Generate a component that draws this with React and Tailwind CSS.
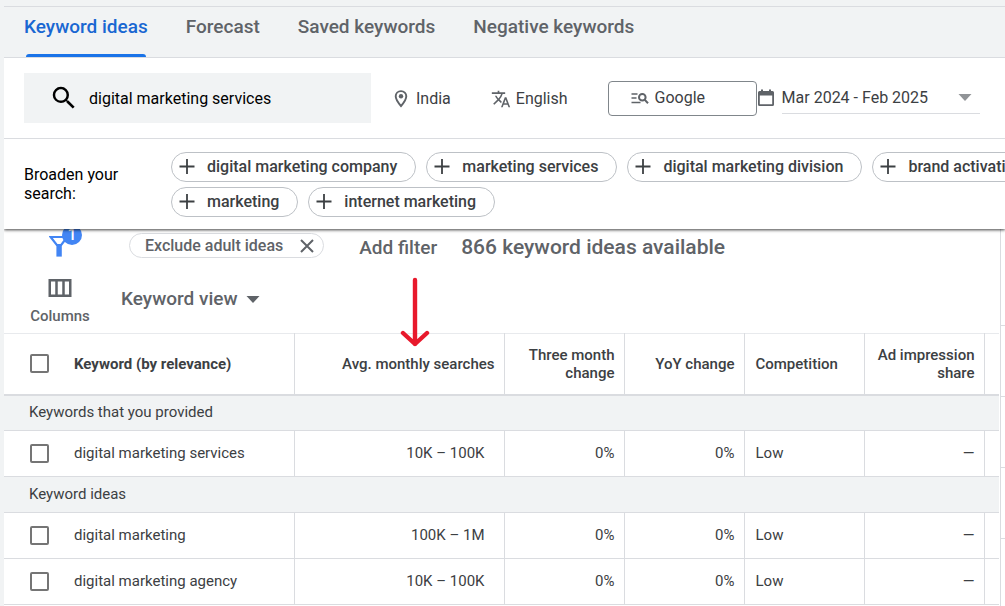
import React from "react";
import { MdSearch, MdTranslate } from "react-icons/md";

const tabs = ["Keyword ideas", "Forecast", "Saved keywords", "Negative keywords"];

const suggestions = [
  ["digital marketing company", "marketing services", "digital marketing division", "brand activation"],
  ["marketing", "internet marketing"],
];

const groups = [
  {
    title: "Keywords that you provided",
    rows: [{ keyword: "digital marketing services", searches: "10K – 100K" }],
  },
  {
    title: "Keyword ideas",
    rows: [
      { keyword: "digital marketing", searches: "100K – 1M" },
      { keyword: "digital marketing agency", searches: "10K – 100K" },
    ],
  },
];

function PlusIcon() {
  return (
    <svg viewBox="0 0 16 16" className="size-4 shrink-0" fill="none" stroke="#3c4043" strokeWidth="1.8" aria-hidden="true">
      <path d="M8 0v15M0.5 7.5h15" />
    </svg>
  );
}

function CloseIcon() {
  return (
    <svg viewBox="0 0 14 14" className="size-3.5" fill="none" stroke="#5f6368" strokeWidth="2" aria-hidden="true">
      <path d="M1 1l12 12M13 1L1 13" />
    </svg>
  );
}

function PlaceIcon() {
  return (
    <svg viewBox="0 0 20 20" className="size-5 shrink-0" fill="none" aria-hidden="true">
      <path d="M10 2.1c-3 0-5.3 2.3-5.3 5.2C4.7 11 10 17 10 17s5.3-6 5.3-9.7c0-2.9-2.3-5.2-5.3-5.2z" stroke="#5f6368" strokeWidth="1.9" />
      <circle cx="10" cy="7.3" r="2.2" fill="#5f6368" />
    </svg>
  );
}

function CalendarIcon() {
  return (
    <svg viewBox="0 0 18 18" className="size-[18px] shrink-0" aria-hidden="true">
      <path
        fill="#5f6368"
        fillRule="evenodd"
        d="M4 0.5h2V2h6V0.5h2V2h1.5A1.5 1.5 0 0 1 17 3.500V15.500A1.500 1.500 0 0 1 15.500 17H2.500A1.500 1.500 0 0 1 1 15.500V3.500A1.500 1.500 0 0 1 2.500 2H4zM2.800 6.500v8.700h12.400V6.500z"
      />
    </svg>
  );
}

function NetworkIcon() {
  return (
    <svg viewBox="0 0 18 14" className="h-3.5 w-[18px] shrink-0" fill="none" stroke="#5f6368" aria-hidden="true">
      <path d="M0.5 3h6M0.5 7h5M0.5 11.5h9" strokeWidth="1.6" />
      <circle cx="11.3" cy="6.2" r="3.3" strokeWidth="2" />
      <path d="M13.6 8.6L17 12.2" strokeWidth="2" />
    </svg>
  );
}

function FunnelIcon() {
  return (
    <svg viewBox="0 0 22 22" className="size-[22px]" fill="none" aria-hidden="true">
      <path d="M1.6 2h16.6l-6 8H7.800z" stroke="#4285f4" strokeWidth="2.2" />
      <path d="M7.4 9h5.4v12.6H7.4z" fill="#4285f4" />
    </svg>
  );
}

function ColumnsIcon() {
  return (
    <svg viewBox="0 0 24 18" className="h-[18px] w-6" fill="none" stroke="#5f6368" strokeWidth="2.5" aria-hidden="true">
      <path d="M1.75 1.25h20.5v15.5h-20.5zM8.5 1v16M15.5 1v16" />
    </svg>
  );
}

function Caret({ className }) {
  return (
    <svg viewBox="0 0 14 7" className={`h-[7px] w-3.5 ${className}`} fill="currentColor" aria-hidden="true">
      <path d="M0.5 0h13L7 7z" />
    </svg>
  );
}

function Tick({ label }) {
  return (
    <input
      type="checkbox"
      aria-label={label}
      className="block size-[19px] appearance-none rounded-xs border-2 border-[#757575] bg-white checked:bg-[#1a73e8]"
    />
  );
}

function Tabs() {
  return (
    <nav className="flex h-[52px] gap-[38px] border-y border-[#dadce0] pl-5 text-[19px]/6 font-medium">
      {tabs.map((tab, i) => (
        <a
          key={tab}
          href="#"
          className={
            i === 0
              ? "flex flex-col justify-between pt-2 text-[#1967d2]"
              : "flex flex-col justify-between pt-2 text-[#5f6368]"
          }
        >
          {tab}
          {i === 0 && <span className="mx-0.5 h-[3px] rounded-t-full bg-[#1a73e8]" />}
        </a>
      ))}
    </nav>
  );
}

function SearchBar() {
  return (
    <div className="flex items-center bg-white py-[15px] pl-5 text-base text-[#3c4043]">
      <label className="flex h-[50px] w-[347px] shrink-0 items-center gap-2.5 bg-[#f1f3f4] pl-[25px] text-black">
        <MdSearch className="size-[30px] shrink-0" />
        <input
          type="text"
          aria-label="Keywords"
          defaultValue="digital marketing services"
          className="w-full min-w-0 bg-transparent pt-0.5 outline-none"
        />
      </label>
      <button className="ml-5 flex shrink-0 items-center gap-[5px] pt-0.5">
        <PlaceIcon />
        India
      </button>
      <button className="ml-10 flex shrink-0 items-center gap-[5px] pt-0.5">
        <MdTranslate className="size-5 text-[#5f6368]" />
        English
      </button>
      <button className="ml-10 flex h-[35px] w-[149px] shrink-0 items-center gap-1.5 rounded border border-[#80868b] pl-[22px]">
        <NetworkIcon />
        Google
      </button>
      <div className="flex grow items-center gap-[7px] pr-[25px]">
        <CalendarIcon />
        <label className="flex h-8 grow items-center border-b border-[#dadce0] pr-2">
          <select aria-label="Date range" className="grow appearance-none bg-transparent outline-none">
            <option>Mar 2024 - Feb 2025</option>
          </select>
          <Caret className="text-[#919497]" />
        </label>
      </div>
    </div>
  );
}

function Broaden() {
  return (
    <section className="relative z-10 flex items-start border-t border-[#dadce0] bg-white pt-[13px] pb-3 pl-5 shadow-[0_1px_3px_rgba(0,0,0,0.75)] [clip-path:inset(0_0_-6px_0)]">
      <h2 className="w-[147px] shrink-0 pt-[13px] pr-8 text-base/[19px] text-black">Broaden your search:</h2>
      <div className="flex flex-col gap-[5px]">
        {suggestions.map((line) => (
          <div key={line[0]} className="flex gap-2.5">
            {line.map((text) => (
              <button
                key={text}
                className="flex h-[30px] shrink-0 items-center gap-3 rounded-full border border-[#bdc1c6] pr-[18px] pl-[7px] text-base font-medium whitespace-nowrap text-[#3c4043]"
              >
                <PlusIcon />
                {text}
              </button>
            ))}
          </div>
        ))}
      </div>
    </section>
  );
}

function Toolbar() {
  return (
    <section className="relative flex pb-[9px] pl-4 text-[#5f6368]">
      <div className="flex w-20 shrink-0 flex-col items-center pt-1.5">
        <button aria-label="Filters, 1 applied" className="relative">
          <FunnelIcon />
          <span className="absolute -top-[10px] left-[13px] flex size-5 items-center justify-center rounded-full bg-[#4285f4] text-base/5 font-medium text-white">
            1
          </span>
        </button>
        <button className="mt-[22px] flex flex-col items-center gap-[11px] text-[15px]/4 font-medium">
          <ColumnsIcon />
          Columns
        </button>
      </div>
      <div className="flex grow flex-col items-start pt-1 pl-[21px]">
        <div className="flex items-start gap-[35px] pl-2">
          <div className="flex h-[25px] items-center gap-[17px] rounded-full border border-[#dadce0] pr-[9px] pl-[15px] text-base font-medium">
            Exclude adult ideas
            <button aria-label="Remove filter">
              <CloseIcon />
            </button>
          </div>
          <div className="flex items-start gap-6">
            <button className="pt-px text-[19px]/7 font-medium">Add filter</button>
            <p className="text-[21px]/7 font-medium">866 keyword ideas available</p>
          </div>
        </div>
        <label className="mt-[25px] flex items-center gap-2 text-[19px]/6 font-medium">
          <select aria-label="View" className="appearance-none bg-transparent outline-none">
            <option>Keyword view</option>
          </select>
          <Caret className="text-[#5f6368]" />
        </label>
      </div>
      <svg
        viewBox="0 0 30 72"
        className="absolute top-[47px] left-[396px] z-10 h-[72px] w-[30px]"
        fill="none"
        stroke="#e8192c"
        strokeWidth="4.4"
        strokeLinecap="round"
        strokeLinejoin="round"
        aria-hidden="true"
      >
        <path d="M15 4v64M3 57l12 11 12-11" />
      </svg>
    </section>
  );
}

function KeywordTable() {
  return (
    <table className="w-full table-fixed border-t border-[#e8eaed] text-[15px]/[18px] text-[#3c4043]">
      <colgroup>
        <col className="w-[70px]" />
        <col />
        <col className="w-[210px]" />
        <col className="w-[120px]" />
        <col className="w-[120px]" />
        <col className="w-[120px]" />
        <col className="w-[120px]" />
        <col className="w-[15px]" />
      </colgroup>
      <thead>
        <tr className="h-[61px] border-b-2 border-[#dadce0] *:font-medium">
          <th className="pl-[26px]">
            <Tick label="Select all keywords" />
          </th>
          <th className="border-r border-[#dadce0] text-left font-bold!">Keyword (by relevance)</th>
          <th className="border-r border-[#dadce0] pr-[9px] text-right">Avg. monthly searches</th>
          <th className="border-r border-[#dadce0] pr-[9px] text-right">Three month change</th>
          <th className="border-r border-[#dadce0] pr-[9px] text-right">YoY change</th>
          <th className="border-r border-[#dadce0] pl-[11px] text-left">Competition</th>
          <th className="border-r border-[#dadce0] pr-[9px] text-right">Ad impression share</th>
          <td />
        </tr>
      </thead>
      {groups.map((group) => (
        <tbody key={group.title}>
          <tr className="h-9 border-b border-[#dadce0] bg-[#f1f3f4]">
            <th colSpan={8} className="pb-0.5 pl-[25px] text-left font-normal">
              {group.title}
            </th>
          </tr>
          {group.rows.map((row) => (
            <tr key={row.keyword} className="h-[46px] border-b border-[#dadce0] *:not-first:pb-0.5">
              <td className="pl-[26px]">
                <Tick label={row.keyword} />
              </td>
              <td className="border-r border-[#dadce0]">{row.keyword}</td>
              <td className="border-r border-[#dadce0] pr-[19px] text-right">{row.searches}</td>
              <td className="border-r border-[#dadce0] pr-[9px] text-right">0%</td>
              <td className="border-r border-[#dadce0] pr-[9px] text-right">0%</td>
              <td className="border-r border-[#dadce0] pl-[11px]">Low</td>
              <td className="border-r border-[#dadce0] pr-[9px] text-right">—</td>
              <td />
            </tr>
          ))}
        </tbody>
      ))}
    </table>
  );
}

function Rail() {
  return (
    <aside className="ml-px flex w-[5px] shrink-0 flex-col border-l border-[#dadce0] pt-[25px]">
      <div className="h-[72px] border-b border-[#dadce0]" />
      <div className="h-[71px] border-b border-[#dadce0]" />
      <div className="h-[71px] border-b border-[#dadce0]" />
      <div className="h-[71px] border-b border-[#dadce0]" />
    </aside>
  );
}

export default function App() {
  return (
    <div className="min-h-screen overflow-x-clip bg-[#f1f3f4] pt-1.5 pl-1 font-['Roboto',sans-serif]">
      <Tabs />
      <SearchBar />
      <Broaden />
      <main className="flex min-h-[377px] bg-white">
        <div className="min-w-0 grow">
          <Toolbar />
          <KeywordTable />
        </div>
        <Rail />
      </main>
    </div>
  );
}
